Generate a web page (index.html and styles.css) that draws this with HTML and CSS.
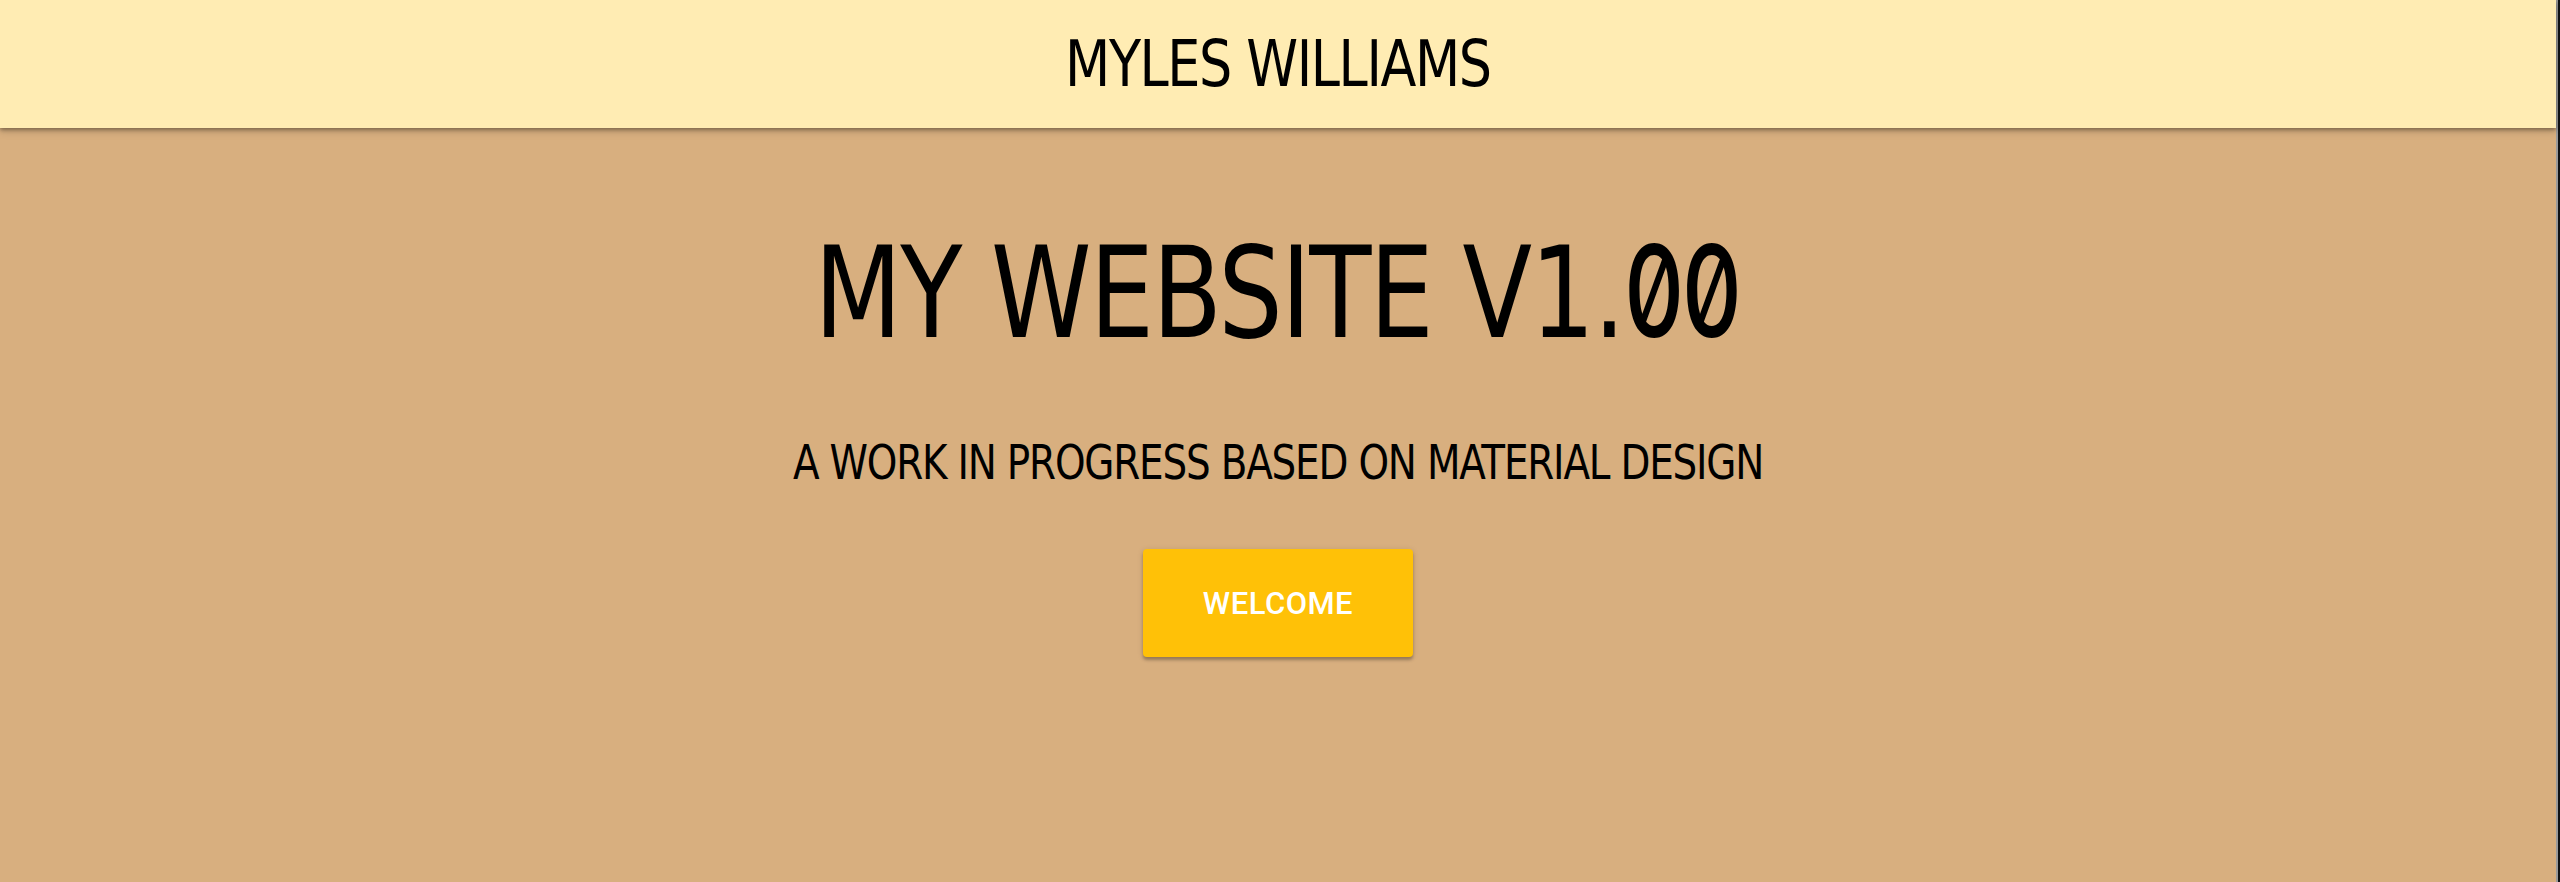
FILE: index.html
```html
<!DOCTYPE html>
<html lang="en">
<head>
<meta charset="utf-8">
<title>Myles Williams</title>
<link rel="stylesheet" href="styles.css">
</head>
<body>
<div class="page">
  <header class="topbar">
    <h1 class="brand"><span class="squeeze brand-text">MYLES WILLIAMS</span></h1>
  </header>
  <main class="hero">
    <h2 class="title"><span class="squeeze title-text">MY WEBSITE V1.<span class="zero">0</span><span class="zero">0</span></span></h2>
    <p class="subtitle"><span class="squeeze subtitle-text">A WORK IN PROGRESS BASED ON MATERIAL DESIGN</span></p>
    <button class="btn" type="button">WELCOME</button>
  </main>
</div>
<div class="edge"></div>
</body>
</html>
```

FILE: styles.css
```css
html, body {
  margin: 0;
  height: 100%;
}
body {
  display: flex;
  background: #111214;
  font-family: "DejaVu Sans Condensed", "DejaVu Sans", sans-serif;
  color: #000;
  overflow: hidden;
}
.page {
  flex: 1;
  display: flex;
  flex-direction: column;
  background: #d8af7f;
  min-width: 0;
}
.edge {
  width: 2px;
  border-left: 2px solid #9a9a9a;
  background: #111214;
}
.topbar {
  position: relative;
  z-index: 1;
  height: 128px;
  background: #ffecb3;
  box-shadow: 0 2px 4px rgba(0,0,0,0.35), 0 4px 8px rgba(0,0,0,0.12);
  display: flex;
  justify-content: center;
}
.squeeze {
  display: inline-block;
  transform-origin: center center;
  white-space: nowrap;
}
.brand {
  margin: 0;
  font-weight: 400;
  font-size: 64px;
  line-height: 128px;
  letter-spacing: -1.5px;
}
.brand-text {
  transform: scaleX(0.91);
}
.hero {
  display: flex;
  flex-direction: column;
  align-items: center;
  padding-top: 100px;
}
.title {
  margin: 0;
  font-weight: 400;
  font-size: 127px;
  line-height: 127px;
  letter-spacing: -2px;
}
.title-text {
  transform: scaleX(0.89);
}
.zero {
  display: inline-block;
  font-family: Inter, sans-serif;
  font-feature-settings: "zero" 1;
  font-weight: 500;
  transform: scaleX(0.82);
  transform-origin: left center;
  margin-right: -14px;
}
.subtitle {
  margin: 81px 0 0;
  font-size: 48px;
  line-height: 48px;
  letter-spacing: -1.3px;
}
.subtitle-text {
  transform: scaleX(0.9);
}
.btn {
  margin-top: 63px;
  width: 270px;
  height: 108px;
  border: 0;
  border-radius: 4px;
  background: #ffc107;
  color: #fff;
  font-family: Roboto, "Liberation Sans", sans-serif;
  font-weight: 500;
  font-size: 31px;
  letter-spacing: 0.5px;
  box-shadow: 0 3px 3px rgba(0,0,0,0.25), 0 1px 6px rgba(0,0,0,0.12);
  padding: 0;
}
```
